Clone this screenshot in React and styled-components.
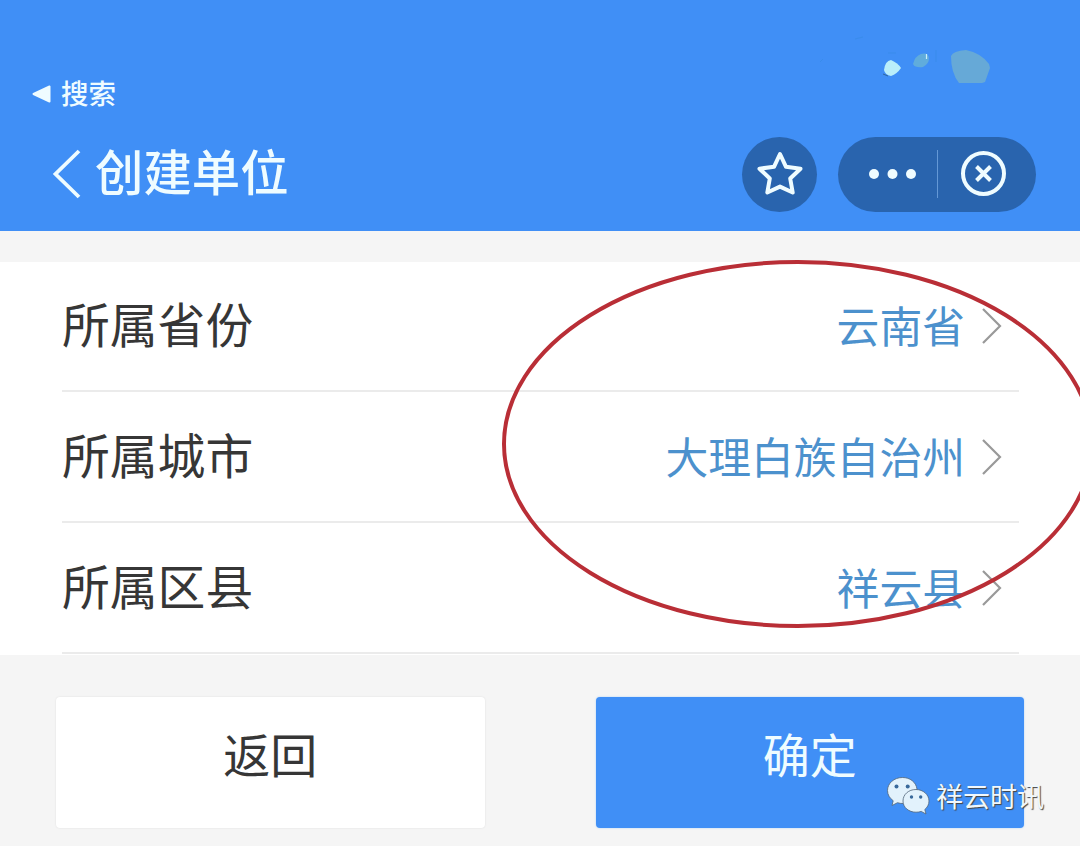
import React from "react";
import styled, { createGlobalStyle } from "styled-components";

const regions = [
  { label: "所属省份", value: "云南省" },
  { label: "所属城市", value: "大理白族自治州" },
  { label: "所属区县", value: "祥云县" },
];

export default function App() {
  return (
    <Page>
      <GlobalStyle />

      <Header>
        <StatusBar>
          <svg width="190" height="50" viewBox="0 0 190 50">
            <path d="M10 26l3-3M45 3l8-2M78 17h8M126 14v12" stroke="#368be5" opacity="0.6" />
            <path d="M74 34Q75 25 81 24Q88 27 91 32Q87 38 81 40Q75 39 74 34Z" fill="#b9eefa" />
            <path d="M73 38l5 2" stroke="#2f679f" strokeWidth="1" />
            <path d="M103 28Q105 20 111 18Q118 16 119 22Q119 28 113 31Q105 32 103 28Z" fill="#60acdc" />
            <path d="M116.500 18V23" stroke="#cceefa" strokeWidth="1.200" />
            <path d="M141 20Q143 15 156 14Q171 17 179 28L180 32L175 46L172 47H149Q141 37 141 20Z" fill="#66a9d7" />
          </svg>
        </StatusBar>

        <SearchBack>
          <svg width="20" height="20" viewBox="0 0 20 20">
            <path
              d="M1.500 10L17.500 2.500V17.500Z"
              fill="#effcff"
              stroke="#effcff"
              strokeWidth="2"
              strokeLinejoin="round"
            />
          </svg>
          <span>搜索</span>
        </SearchBack>

        <TitleBar>
          <BackButton aria-label="返回上一页">
            <svg width="30" height="50" viewBox="0 0 30 50">
              <path d="M28 2L4.500 25L28 48" fill="none" stroke="#effcff" strokeWidth="3.800" />
            </svg>
          </BackButton>
          <Title>创建单位</Title>

          <StarButton aria-label="收藏">
            <svg width="48" height="48" viewBox="0 0 48 48">
              <path
                d="M24 4L30 16.800L44.500 18.700L34.200 28.500L36.700 42.500L24 36.600L11.300 42.500L13.800 28.500L3.500 18.700L18 16.800Z"
                fill="none"
                stroke="#effcff"
                strokeWidth="4"
                strokeLinejoin="round"
              />
            </svg>
          </StarButton>

          <Capsule>
            <CapsuleButton $width={99} $shift={10} aria-label="更多">
              <svg width="50" height="12" viewBox="0 0 50 12">
                <circle cx="6" cy="6" r="5" fill="#effcff" />
                <circle cx="24.500" cy="6" r="5" fill="#effcff" />
                <circle cx="43" cy="6" r="5" fill="#effcff" />
              </svg>
            </CapsuleButton>
            <CapsuleLine />
            <CapsuleButton $width={91} $shift={0} aria-label="关闭">
              <svg width="46" height="46" viewBox="0 0 46 46">
                <circle cx="22.500" cy="22.500" r="20.500" fill="none" stroke="#effcff" strokeWidth="4" />
                <path d="M15.500 15.500L29.500 29.500M29.500 15.500L15.500 29.500" stroke="#effcff" strokeWidth="4" />
              </svg>
            </CapsuleButton>
          </Capsule>
        </TitleBar>
      </Header>

      <List>
        {regions.map((region) => (
          <Row key={region.label}>
            <Label>{region.label}</Label>
            <Value>{region.value}</Value>
            <svg width="22" height="38" viewBox="0 0 22 38">
              <path d="M2 2L19 19L2 36" fill="none" stroke="#999" strokeWidth="2.200" />
            </svg>
          </Row>
        ))}
      </List>

      <Actions>
        <ActionButton>返回</ActionButton>
        <ActionButton $primary>确定</ActionButton>
      </Actions>

      <CircleMark width="600" height="380" viewBox="0 0 600 380">
        <ellipse cx="300" cy="190" rx="294" ry="182" fill="none" stroke="#b92e36" strokeWidth="4" />
      </CircleMark>

      <Watermark>
        <svg width="44" height="40" viewBox="0 0 44 40">
          <g fill="#e2f2fc" stroke="#506578" strokeWidth="0.800">
            <path d="M16.500 1.500C8 1.500 1.500 7.300 1.500 14.500C1.500 18.800 3.800 22.300 7.200 24.700L6 29.500L11.500 26.700Q14 27.600 17.500 27.500H21L31 13C30 6 24 1.500 16.500 1.500Z" />
            <path d="M30 13.500C22.500 13.500 17 18.500 17 25C17 31.500 22.800 36.200 30 36.200Q33 36.200 35.200 35.400L40 38L38.800 33.500C41.300 31.500 43 28.500 43 25C43 18.500 37 13.500 30 13.500Z" />
          </g>
          <g fill="#38699b">
            <circle cx="10.500" cy="10.500" r="2" />
            <circle cx="21.700" cy="10.500" r="2" />
            <circle cx="25.500" cy="21" r="1.700" />
            <circle cx="34.700" cy="21" r="1.700" />
          </g>
        </svg>
        <span>祥云时讯</span>
      </Watermark>
    </Page>
  );
}

const GlobalStyle = createGlobalStyle`
  * {
    box-sizing: border-box;
  }

  body {
    margin: 0;
    background: #f5f5f5;
  }

  button {
    padding: 0;
    border: 0;
    background: none;
    font-family: inherit;
  }

  svg {
    display: block;
    flex-shrink: 0;
  }
`;

const Page = styled.div`
  position: relative;
  width: 1080px;
  height: 846px;
  overflow: hidden;
  background: #f5f5f5;
  font-family: "Noto Sans CJK SC", sans-serif;
`;

const Header = styled.header`
  height: 230.5px;
  background: #408ff6;
`;

const StatusBar = styled.div`
  display: flex;
  justify-content: flex-end;
  height: 74px;
  padding: 36px 80px 0 0;
`;

const SearchBack = styled.div`
  display: flex;
  align-items: center;
  gap: 9px;
  height: 40px;
  padding-left: 32px;
  color: #effcff;
  font-size: 27.5px;
  font-weight: 500;
  line-height: 40px;

  span {
    padding-bottom: 4px;
  }
`;

const TitleBar = styled.div`
  display: flex;
  align-items: center;
  height: 120px;
  padding: 0 44px 0 51px;
`;

const BackButton = styled.button`
  width: 30px;
  height: 50px;
`;

const Title = styled.h1`
  flex: 1;
  margin: 0 0 0 14px;
  padding-bottom: 8px;
  color: #effcff;
  font-size: 48.4px;
  font-weight: 500;
  line-height: 60px;
`;

const StarButton = styled.button`
  display: flex;
  align-items: center;
  justify-content: center;
  width: 75px;
  height: 75px;
  margin-right: 21px;
  border-radius: 50%;
  background: #2964ae;
`;

const Capsule = styled.div`
  display: flex;
  align-items: center;
  width: 198px;
  height: 75px;
  border-radius: 38px;
  background: #2964ae;
`;

const CapsuleButton = styled.button`
  display: flex;
  align-items: center;
  justify-content: center;
  width: ${({ $width }) => $width}px;
  height: 75px;
  padding-left: ${({ $shift }) => $shift}px;
`;

const CapsuleLine = styled.div`
  width: 1px;
  height: 48px;
  background: #6498d6;
`;

const List = styled.section`
  height: 393px;
  margin-top: 31.5px;
  background: #fff;
`;

const Row = styled.div`
  display: flex;
  align-items: center;
  height: 131px;
  margin: 0 61px 0 62px;
  padding-right: 16px;
  border-bottom: 2px solid #ebebeb;

  &:first-child {
    height: 130px;
  }
`;

const Label = styled.span`
  flex: 1;
  padding-bottom: 6px;
  color: #363636;
  font-size: 47.8px;
  line-height: 70px;
`;

const Value = styled.span`
  margin-right: 16px;
  padding-bottom: 4px;
  color: #4c91cd;
  font-size: 42.8px;
  line-height: 64px;
`;

const Actions = styled.div`
  display: flex;
  justify-content: space-between;
  padding: 42px 56px 0;
`;

const ActionButton = styled.button`
  width: 428.5px;
  height: 131px;
  padding-bottom: 19px;
  border-radius: 4px;
  background: ${({ $primary }) => ($primary ? "#408ff6" : "#fff")};
  box-shadow: 0 0 2px ${({ $primary }) => ($primary ? "#a9d0fa" : "#ddd")};
  color: ${({ $primary }) => ($primary ? "#effcff" : "#363636")};
  font-size: 47px;
  line-height: 60px;
`;

const CircleMark = styled.svg`
  position: absolute;
  top: 254px;
  left: 498px;
  pointer-events: none;
`;

const Watermark = styled.div`
  position: absolute;
  top: 776px;
  left: 886px;
  display: flex;
  align-items: center;
  gap: 6px;
  color: #f1f8fc;
  font-size: 27px;
  line-height: 40px;
  white-space: nowrap;
  text-shadow: 1px 1px 1px #444;
`;
